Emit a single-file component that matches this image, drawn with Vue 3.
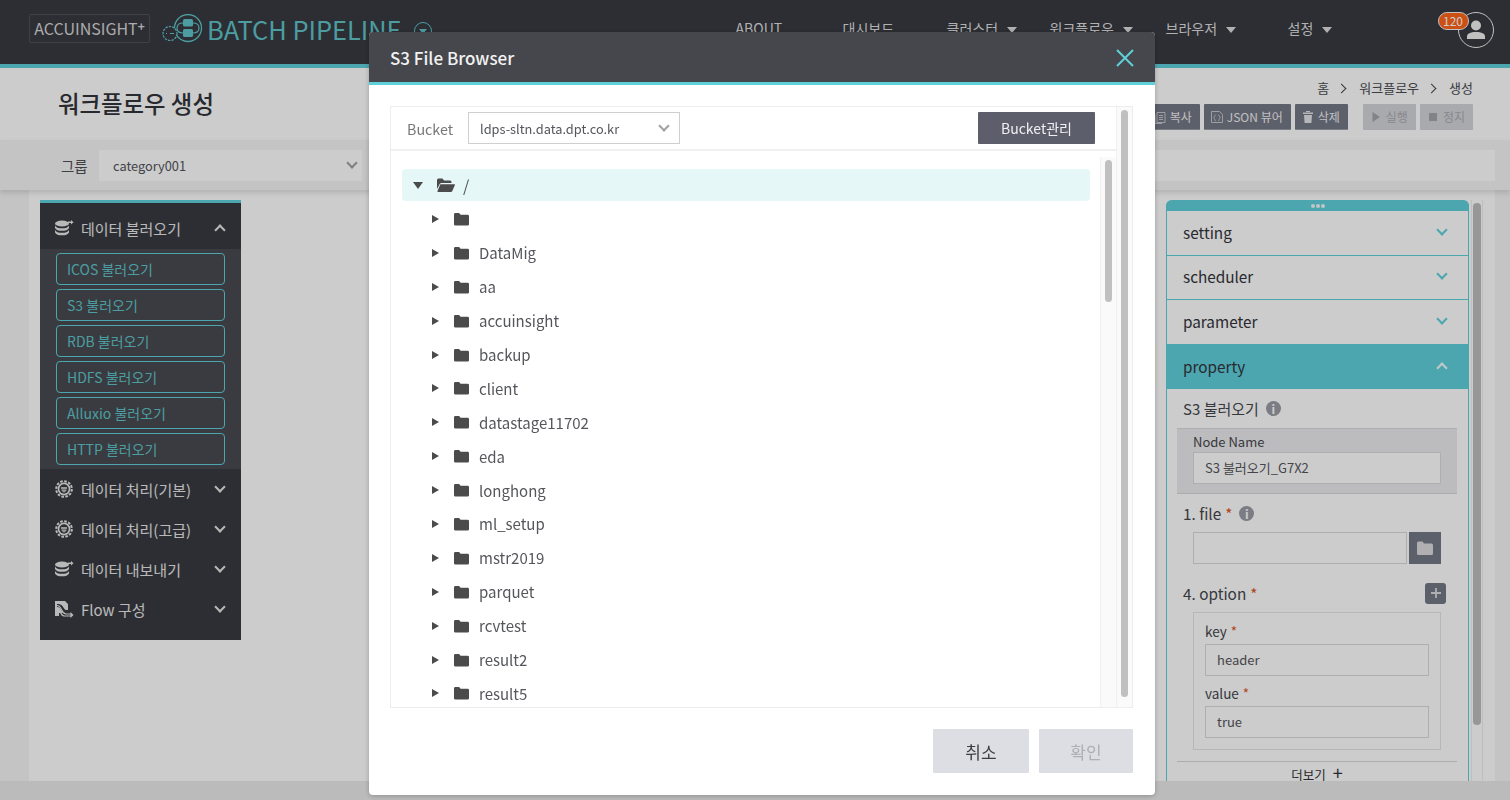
<script setup>
const navItems = [
  { label: 'ABOUT', width: 107 },
  { label: '대시보드', width: 104 },
  { label: '클러스터', width: 103, caret: true },
  { label: '워크플로우', width: 116, caret: true },
  { label: '브라우저', width: 122, caret: true },
  { label: '설정', width: 100, caret: true }
]

const loaders = ['ICOS 불러오기', 'S3 불러오기', 'RDB 불러오기', 'HDFS 불러오기', 'Alluxio 불러오기', 'HTTP 불러오기']

const menus = [
  { label: '데이터 처리(기본)', icon: 'gear' },
  { label: '데이터 처리(고급)', icon: 'gear' },
  { label: '데이터 내보내기', icon: 'db' },
  { label: 'Flow 구성', icon: 'flow' }
]

const folders = ['', 'DataMig', 'aa', 'accuinsight', 'backup', 'client', 'datastage11702', 'eda', 'longhong', 'ml_setup', 'mstr2019', 'parquet', 'rcvtest', 'result2', 'result5', 'sample']

const sections = ['setting', 'scheduler', 'parameter']
</script>

<template>
  <div class="page">
    <header class="topbar">
      <div class="brand-box">ACCUINSIGHT<sup>+</sup></div>
      <svg class="logo" viewBox="0 0 44 32" width="44" height="32" fill="none" stroke="#5fc5ca">
        <circle cx="28" cy="14" r="13.500" stroke-width="1.300" />
        <circle cx="10" cy="19.500" r="7" fill="#383a41" stroke-width="1.200" stroke-dasharray="2.500 1" />
        <path d="M10 19.500h4M6 19.500h1" stroke-width="1.200" />
        <path d="M23 9q-6 0-6 5t6 5M33 9q6 0 6 5t-6 5" stroke-width="1.200" />
        <rect x="23" y="5" width="10" height="7.500" rx="1.500" fill="#5fc5ca" stroke="none" />
        <rect x="23" y="15" width="10" height="8" rx="1.500" fill="#5fc5ca" stroke="none" />
      </svg>
      <div class="product">BATCH PIPELINE</div>
      <span class="product-toggle"><i></i></span>
      <nav class="nav">
        <a v-for="item in navItems" :key="item.label" class="nav-item" :style="{ width: item.width + 'px' }">
          {{ item.label }}<i v-if="item.caret" class="caret"></i>
        </a>
      </nav>
      <div class="profile">
        <span class="badge">120</span>
        <svg viewBox="0 0 24 24" width="24" height="24" fill="#f2f2f2">
          <circle cx="12" cy="7.500" r="5" />
          <path d="M3 21v-2.500c0-3 3.500-4.500 9-4.500s9 1.500 9 4.500V21z" />
        </svg>
      </div>
    </header>

    <section class="title-band">
      <h1>워크플로우 생성</h1>
      <div class="title-right">
        <div class="crumbs">
          <span>홈</span><i class="crumb-arrow"></i><span>워크플로우</span><i class="crumb-arrow"></i><span>생성</span>
        </div>
        <div class="tools">
          <button class="tool">
            <svg viewBox="0 0 14 14" width="14" height="14" fill="none" stroke="#c4c6cc"><path d="M4 2.500h8v10H4zM2 4.500v9h7M6 5.500h4M6 7.500h4M6 9.500h4" /></svg>복사
          </button>
          <button class="tool">
            <svg viewBox="0 0 14 14" width="14" height="14" fill="none" stroke="#c4c6cc"><path d="M1.500 1.500h8l3 3v8h-11z" /><path d="M6 5q-1.500 0-1.500 1.500v.5l-1 .5 1 .5v.5Q4.500 11 6 11M8 5q1.500 0 1.500 1.500v.5l1 .5-1 .5v.5Q9.500 11 8 11" stroke-width=".8" /></svg>JSON 뷰어
          </button>
          <button class="tool">
            <svg viewBox="0 0 14 14" width="14" height="14" fill="#e4e5e8"><path d="M2 2.500h10v1.500H2zM5 1h4v1H5zM3 5h8l-.6 8H3.600z" /></svg>삭제
          </button>
          <button class="tool off gap-left">
            <svg viewBox="0 0 14 14" width="14" height="14" fill="#a2a4a9"><path d="M3.500 2l7.500 5-7.500 5z" /></svg>실행
          </button>
          <button class="tool off">
            <svg viewBox="0 0 14 14" width="14" height="14" fill="#a2a4a9"><rect x="3" y="3" width="8" height="8" /></svg>정지
          </button>
        </div>
      </div>
    </section>

    <section class="filter-band">
      <label>그룹</label>
      <div class="filter-select">category001<i class="chev down grey"></i></div>
      <div class="filter-rest"></div>
    </section>

    <main class="workspace">
      <aside class="palette">
        <div class="menu-row open">
          <svg class="menu-icon" viewBox="0 0 20 18" width="20" height="18" fill="#e8e8e8">
            <ellipse cx="8" cy="4.500" rx="7" ry="3" />
            <path d="M1 6.500c1 2 3.500 2.800 7 2.800s6-.8 7-2.800v2.500c-1 2-3.500 2.800-7 2.800S2 11 1 9zM1 11c1 2 3.500 2.800 7 2.800s6-.8 7-2.800v2.500c-1 2-3.500 2.800-7 2.800s-6-.8-7-2.800z" />
            <path d="M14 2.500h3V1l2.500 2.200L17 5.400V4h-3z" />
          </svg>
          <span>데이터 불러오기</span>
          <i class="chev up"></i>
        </div>
        <div class="loader-list">
          <a v-for="name in loaders" :key="name" class="loader">{{ name }}</a>
        </div>
        <div v-for="menu in menus" :key="menu.label" class="menu-row">
          <svg v-if="menu.icon === 'gear'" class="menu-icon" viewBox="0 0 18 18" width="18" height="18" fill="none">
            <circle cx="9" cy="9" r="7.800" stroke="#e8e8e8" stroke-width="2" stroke-dasharray="2.600 1.480" />
            <circle cx="9" cy="9" r="6.400" fill="#e8e8e8" />
            <circle cx="9" cy="9" r="4.700" fill="#383a41" />
            <path d="M6 7.300h6v1.400H6zM6.500 9.500h5v1.200h-5zM7.500 11.300h3v1h-3z" fill="#e8e8e8" />
          </svg>
          <svg v-else-if="menu.icon === 'db'" class="menu-icon" viewBox="0 0 20 18" width="20" height="18" fill="#e8e8e8">
            <ellipse cx="8" cy="4.500" rx="7" ry="3" />
            <path d="M1 6.500c1 2 3.500 2.800 7 2.800s6-.8 7-2.800v2.500c-1 2-3.500 2.800-7 2.800S2 11 1 9zM1 11c1 2 3.500 2.800 7 2.800s6-.8 7-2.800v2.500c-1 2-3.500 2.800-7 2.800s-6-.8-7-2.800z" />
            <path d="M14 2.500h3V1l2.500 2.200L17 5.400V4h-3z" />
          </svg>
          <svg v-else class="menu-icon" viewBox="0 0 20 18" width="20" height="18" fill="none">
            <path d="M1 1h10l3 3v6h-2.500c-1.500-1-2-3-3.500-4.500S4.500 4 3 4v3c1.500 0 2.500.5 3.500 2s1.500 3 2.500 4H5v3H1z" fill="#e8e8e8" />
            <path d="M3 5.500c5 0 4 8 9 8.500h5M3 8.500c3.500 0 3 7 7 7.500h7" stroke="#e8e8e8" stroke-width="1.200" />
            <path d="M16.500 12l3 3-3 3z" fill="#e8e8e8" />
          </svg>
          <span>{{ menu.label }}</span>
          <i class="chev down"></i>
        </div>
      </aside>

      <div class="spacer"></div>

      <aside class="props">
        <div class="props-grip"><i></i><i></i><i></i></div>
        <div v-for="name in sections" :key="name" class="section-row">
          {{ name }}<i class="chev down teal"></i>
        </div>
        <div class="section-row active">property<i class="chev up light"></i></div>
        <div class="props-body">
          <div class="node-title">S3 불러오기<span class="info">i</span></div>
          <div class="node-band">
            <div class="band-label">Node Name</div>
            <div class="field">S3 불러오기_G7X2</div>
          </div>
          <div class="prop-head file-head">1. file<em>*</em><span class="info">i</span></div>
          <div class="file-row">
            <div class="field"></div>
            <button class="file-btn">
              <svg viewBox="0 0 16 14" width="16" height="14" fill="#dcdde0"><path d="M0 2q0-1.500 1.500-1.500h4L7 2.500h7.500Q16 2.500 16 4v8.500q0 1.500-1.500 1.500h-13Q0 14 0 12.500z" /></svg>
            </button>
          </div>
          <div class="prop-head option-head">
            <span>4. option<em>*</em></span>
            <button class="add-btn">
              <svg viewBox="0 0 12 12" width="12" height="12" stroke="#dcdde0" stroke-width="1.800"><path d="M6 1v10M1 6h10" /></svg>
            </button>
          </div>
          <div class="option-box">
            <div class="opt-label">key<em>*</em></div>
            <div class="field">header</div>
            <div class="opt-label value">value<em>*</em></div>
            <div class="field">true</div>
          </div>
          <div class="more">더보기<span>+</span></div>
        </div>
      </aside>

      <div class="props-scroll"><i></i></div>
    </main>

    <footer class="bottom"></footer>

    <div class="overlay">
      <div class="modal">
        <div class="modal-head">
          <span>S3 File Browser</span>
          <svg viewBox="0 0 18 18" width="18" height="18" stroke="#5fd0d8" stroke-width="2" fill="none"><path d="M1 1l16 16M17 1L1 17" /></svg>
        </div>
        <div class="modal-body">
          <div class="browser">
            <div class="browser-main">
              <div class="bucket-row">
                <label>Bucket</label>
                <div class="bucket-select">ldps-sltn.data.dpt.co.kr<i class="chev down grey"></i></div>
                <button class="bucket-btn">Bucket관리</button>
              </div>
              <div class="tree-wrap">
                <div class="tree">
                  <div class="root-row">
                    <i class="tri-down"></i>
                    <svg viewBox="0 0 18 14" width="18" height="14" fill="#4b4b4b">
                      <path d="M0 2q0-1.500 1.500-1.500h4L7 2.500h6q1.500 0 1.500 1.500v1H4.500q-1.200 0-1.800 1L0 11z" />
                      <path d="M3.500 6.200h14q.6 0 .4.700l-2.600 6q-.4 1-1.400 1H1q-.8 0-.5-.8l2.500-6.200q.2-.7.500-.7z" />
                    </svg>
                    <span>/</span>
                  </div>
                  <div v-for="(folder, i) in folders" :key="i" class="tree-row">
                    <i class="tri-right"></i>
                    <svg viewBox="0 0 16 14" width="15" height="14" fill="#4b4b4b"><path d="M0 2q0-1.500 1.500-1.500h4L7 2.500h7.500Q16 2.500 16 4v8.500q0 1.500-1.500 1.500h-13Q0 14 0 12.500z" /></svg>
                    <span>{{ folder }}</span>
                  </div>
                </div>
                <div class="scroll-track inner"><i></i></div>
              </div>
            </div>
            <div class="scroll-track outer"><i></i></div>
          </div>
          <div class="modal-actions">
            <button class="action">취소</button>
            <button class="action disabled">확인</button>
          </div>
        </div>
      </div>
    </div>
  </div>
</template>

<style>
body {
  margin: 0;
  overflow: hidden;
}
</style>

<style scoped>
.page {
  width: 1510px;
  height: 800px;
  overflow: hidden;
  display: flex;
  flex-direction: column;
  background: #f5f5f5;
  color: #383a41;
  font-family: "Noto Sans CJK KR", "Noto Sans", sans-serif;
}

button {
  font-family: inherit;
  border: none;
  padding: 0;
}

i {
  display: block;
  font-style: normal;
}

em {
  font-style: normal;
  color: #e0531c;
  margin-left: 4px;
}

/* 상단 헤더 */
.topbar {
  height: 64px;
  flex: none;
  display: flex;
  align-items: center;
  background: #383a41;
  border-bottom: 4px solid #5fd0dc;
  padding-left: 29px;
}

.brand-box {
  width: 121px;
  height: 29px;
  margin-top: -8px;
  box-sizing: border-box;
  border: 1px solid #50525a;
  border-radius: 2px;
  display: flex;
  align-items: center;
  justify-content: center;
  color: #d6d6d6;
  font-size: 16px;
  line-height: 1;
}

.brand-box sup {
  font-size: 12px;
  font-weight: 700;
  margin-top: -4px;
  vertical-align: baseline;
}

.logo {
  margin: -4px 0 0 10px;
}

.product {
  margin: -7px 0 0 3px;
  font-size: 25.400px;
  line-height: 32px;
  color: #5fc5ca;
  white-space: nowrap;
}

.product-toggle {
  width: 18px;
  height: 18px;
  margin: -2px 0 0 12px;
  box-sizing: border-box;
  border: 1.500px solid #5fc5ca;
  border-radius: 50%;
  display: flex;
  align-items: center;
  justify-content: center;
}

.product-toggle i {
  border-left: 4px solid transparent;
  border-right: 4px solid transparent;
  border-top: 5px solid #5fc5ca;
}

.nav {
  display: flex;
  margin-left: 304px;
  margin-top: -8px;
}

.nav-item {
  display: flex;
  align-items: center;
  font-size: 14px;
  color: #dedede;
  white-space: nowrap;
}

.caret {
  margin: 3px 0 0 9px;
  border-left: 5px solid transparent;
  border-right: 5px solid transparent;
  border-top: 6px solid #dedede;
}

.profile {
  position: relative;
  width: 36px;
  height: 36px;
  margin: -4px 0 0 70px;
  box-sizing: border-box;
  border: 1px solid #f2f2f2;
  border-radius: 50%;
  display: flex;
  align-items: center;
  justify-content: center;
}

.badge {
  position: absolute;
  left: -21px;
  top: -1px;
  width: 31px;
  height: 18px;
  border-radius: 9px;
  border: 1px solid #f2f2f2;
  box-sizing: border-box;
  background: #ff6318;
  color: #fff;
  font-size: 12px;
  line-height: 16px;
  text-align: center;
}

/* 타이틀 영역 */
.title-band {
  height: 72px;
  flex: none;
  display: flex;
  justify-content: space-between;
  background: #fff;
}

.title-band h1 {
  margin: 19px 0 0 58px;
  font-size: 23.400px;
  line-height: 32px;
  font-weight: 500;
  color: #33343a;
}

.title-right {
  display: flex;
  flex-direction: column;
  align-items: flex-end;
  padding-right: 37px;
}

.crumbs {
  display: flex;
  align-items: center;
  margin-top: 10px;
  font-size: 13px;
  line-height: 20px;
  color: #4a4b50;
}

.crumb-arrow {
  width: 6px;
  height: 6px;
  margin: 0 14px 0 9px;
  border-top: 1.500px solid #444;
  border-right: 1.500px solid #444;
  transform: rotate(45deg);
}

.tools {
  display: flex;
  gap: 4px;
  margin-top: 6px;
}

.tool {
  height: 26px;
  padding: 0 8px 0 6px;
  display: flex;
  align-items: center;
  gap: 3px;
  background: #747886;
  border-bottom: 1px solid #9a9da8;
  border-radius: 1px;
  color: #f0f0f2;
  font-size: 12px;
  white-space: nowrap;
}

.tool.off {
  background: #d4d5da;
  border-bottom-color: #d4d5da;
  color: #a9abb0;
}

.gap-left {
  margin-left: 11px;
}

/* 그룹 필터 */
.filter-band {
  height: 50px;
  flex: none;
  display: flex;
  align-items: center;
  gap: 0;
  background: #f5f5f5;
  padding-right: 15px;
  box-shadow: 0 3px 5px rgba(0, 0, 0, 0.12);
  position: relative;
}

.filter-band label {
  margin-left: 61px;
  width: 38px;
  font-size: 14.500px;
  color: #4f5055;
}

.filter-select {
  width: 263px;
  height: 31px;
  box-sizing: border-box;
  padding: 0 6px 0 14px;
  display: flex;
  align-items: center;
  justify-content: space-between;
  background: #fff;
  font-size: 12.800px;
  color: #53545a;
}

.filter-rest {
  flex: 1;
  height: 31px;
  margin-left: 8px;
  background: #fff;
}

.chev {
  width: 6px;
  height: 6px;
  flex: none;
  border-right: 2px solid #e8e8e8;
  border-bottom: 2px solid #e8e8e8;
  transform: rotate(45deg);
  margin-top: -4px;
}

.chev.up {
  transform: rotate(225deg);
  margin-top: 4px;
}

.chev.grey {
  border-color: #a0a0a0;
}

.chev.teal {
  border-color: #5fd0dc;
}

.chev.light {
  border-color: #f4fbfb;
}

/* 작업 영역 */
.workspace {
  flex: 1;
  min-height: 0;
  display: flex;
  align-items: flex-start;
  margin: 0 15px 0 29px;
  padding: 10px 0 0 11px;
  background: #fff;
  overflow: hidden;
}

.palette {
  width: 201px;
  height: 440px;
  flex: none;
  background: #383a41;
  border-top: 3px solid #5fd0dc;
  box-sizing: border-box;
}

.menu-row {
  height: 40px;
  box-sizing: border-box;
  padding: 0 17px 0 14px;
  display: flex;
  align-items: center;
  color: #e8e8e8;
  font-size: 15px;
}

.menu-row.open {
  height: 46px;
  padding-top: 4px;
}

.menu-row span {
  flex: 1;
  margin-left: 7px;
  white-space: nowrap;
}

.menu-icon {
  flex: none;
  width: 20px;
}

.loader-list {
  background: #494a50;
  padding: 4px 16px 0;
  height: 220px;
  box-sizing: border-box;
  display: flex;
  flex-direction: column;
  gap: 4px;
}

.loader {
  height: 32px;
  flex: none;
  box-sizing: border-box;
  border: 1px solid #5fd0dc;
  border-radius: 4px;
  padding-left: 10px;
  display: flex;
  align-items: center;
  color: #5fc5ca;
  font-size: 14px;
}

.spacer {
  flex: 1;
}

.props {
  width: 303px;
  flex: none;
  box-sizing: border-box;
  border: 1px solid #5fd0dc;
  border-top: none;
  border-radius: 6px 6px 0 0;
  background: #fff;
}

.props-grip {
  height: 11px;
  margin: 0 -1px;
  display: flex;
  align-items: center;
  justify-content: center;
  gap: 1px;
  background: #5fd0dc;
  border-radius: 6px 6px 0 0;
}

.props-grip i {
  width: 4px;
  height: 4px;
  border-radius: 50%;
  background: #f0f8f8;
}

.section-row {
  height: 44.500px;
  box-sizing: border-box;
  padding: 0 22px 2px 16px;
  display: flex;
  align-items: center;
  justify-content: space-between;
  border-bottom: 1px solid #5fd0dc;
  font-size: 15.300px;
  color: #33343a;
}

.section-row.active {
  background: #5fd0dc;
  border-bottom: none;
}

.props-body {
  padding: 8px 11px 0 10px;
  color: #45464c;
}

.node-title {
  display: flex;
  align-items: center;
  height: 23px;
  padding-left: 6px;
  font-size: 15px;
}

.info {
  width: 15px;
  height: 15px;
  margin-left: 7px;
  border-radius: 50%;
  background: #9a9ca6;
  color: #fff;
  font-size: 12px;
  line-height: 15px;
  font-weight: 700;
  text-align: center;
}

.node-band {
  margin-top: 8px;
  height: 66px;
  box-sizing: border-box;
  border-top: 1px solid #d8d9dc;
  border-bottom: 1px solid #d8d9dc;
  background: #ebecef;
  padding: 3px 16px 0;
}

.band-label {
  font-size: 13px;
  line-height: 20px;
}

.field {
  height: 32px;
  box-sizing: border-box;
  border: 1px solid #dadbde;
  background: #fff;
  padding: 0 0 2px 11px;
  display: flex;
  align-items: center;
  font-size: 13px;
  color: #55565c;
}

.prop-head {
  display: flex;
  align-items: center;
  padding-left: 6px;
  font-size: 15.300px;
  line-height: 24px;
}

.file-head {
  margin-top: 7px;
}

.file-row {
  display: flex;
  gap: 2px;
  margin: 7px 16px 0;
}

.file-row .field {
  flex: 1;
}

.file-btn {
  width: 32px;
  height: 32px;
  display: flex;
  align-items: center;
  justify-content: center;
  background: #747886;
}

.option-head {
  justify-content: space-between;
  margin-top: 17px;
  padding-right: 11px;
}

.add-btn {
  width: 21px;
  height: 21px;
  border-radius: 3px;
  display: flex;
  align-items: center;
  justify-content: center;
  background: #747886;
}

.option-box {
  margin: 7px 16px 0;
  height: 138px;
  box-sizing: border-box;
  border: 1px solid #e4e5e7;
  padding: 7px 11px 0;
}

.opt-label {
  font-size: 13.500px;
  line-height: 22px;
  margin-bottom: 2px;
}

.opt-label.value {
  margin-top: 6px;
}

.more {
  margin-top: 11px;
  border-top: 1px solid #d8d9dc;
  text-align: center;
  font-size: 12.500px;
  line-height: 26px;
  color: #33343a;
}

.more span {
  margin-left: 7px;
  font-size: 18px;
  line-height: 1;
}

.props-scroll {
  width: 12px;
  height: 590px;
  flex: none;
  margin: 0 12px 0 2px;
  box-sizing: border-box;
  padding: 3px 1px 0;
  border-right: 1px solid #eee;
  border-left: 1px solid #eee;
}

.props-scroll i {
  height: 522px;
  border-radius: 5px;
  background: #bdbdbd;
}

.bottom {
  height: 19px;
  flex: none;
  background: #eaeaea;
}

/* 모달 */
.overlay {
  position: fixed;
  inset: 0;
  box-sizing: border-box;
  padding: 32px 0 0 369px;
  background: rgba(0, 0, 0, 0.2);
}

.modal {
  width: 786px;
  height: 763px;
  display: flex;
  flex-direction: column;
  background: #fff;
  border-radius: 4px;
  overflow: hidden;
  box-shadow: 0 1px 5px rgba(0, 0, 0, 0.25);
}

.modal-head {
  height: 53px;
  flex: none;
  box-sizing: border-box;
  padding: 1px 21px 0;
  display: flex;
  align-items: center;
  justify-content: space-between;
  background: #46474c;
  border-bottom: 3px solid #5fd0d8;
  color: #f2f2f2;
  font-size: 17px;
  font-weight: 500;
}

.modal-body {
  flex: 1;
  min-height: 0;
  padding: 21px 22px 0 21px;
}

.browser {
  height: 602px;
  box-sizing: border-box;
  display: flex;
  border: 1px solid #ededed;
}

.browser-main {
  flex: 1;
  min-width: 0;
  display: flex;
  flex-direction: column;
}

.bucket-row {
  height: 44px;
  flex: none;
  box-sizing: border-box;
  display: flex;
  align-items: center;
  padding: 0 21px 0 16px;
  border-bottom: 2px solid #f0f0f0;
}

.bucket-row label {
  width: 61px;
  font-size: 14.300px;
  color: #777;
}

.bucket-select {
  width: 212px;
  height: 32px;
  box-sizing: border-box;
  border: 1px solid #cfcfcf;
  padding: 0 11px 0 11px;
  display: flex;
  align-items: center;
  justify-content: space-between;
  font-size: 12.800px;
  color: #55565b;
}

.bucket-btn {
  margin-left: auto;
  width: 117px;
  height: 32px;
  background: #5c5f6b;
  border-radius: 1px;
  color: #f0f0f2;
  font-size: 14px;
}

.tree-wrap {
  flex: 1;
  min-height: 0;
  display: flex;
}

.tree {
  flex: 1;
  min-width: 0;
  overflow: hidden;
  padding: 18px 10px 0 11px;
}

.root-row {
  height: 32px;
  box-sizing: border-box;
  padding-left: 11px;
  display: flex;
  align-items: center;
  background: #e5f7f7;
  border-radius: 4px;
  color: #55565b;
  font-size: 16px;
}

.root-row svg {
  margin-left: 14px;
}

.root-row span {
  margin-left: 8px;
}

.tree-row {
  height: 33.900px;
  box-sizing: border-box;
  padding-left: 30px;
  display: flex;
  align-items: center;
  color: #55565b;
  font-size: 15px;
}

.root-row + .tree-row {
  margin-top: 1px;
}

.tree-row svg {
  flex: none;
  margin-left: 15px;
}

.tree-row span {
  margin-left: 10px;
}

.tri-down {
  flex: none;
  border-left: 5px solid transparent;
  border-right: 5px solid transparent;
  border-top: 7px solid #4b4b4b;
}

.tri-right {
  flex: none;
  border-top: 4.500px solid transparent;
  border-bottom: 4.500px solid transparent;
  border-left: 7px solid #4b4b4b;
}

.scroll-track {
  width: 16px;
  flex: none;
  box-sizing: border-box;
  padding: 3px 4px 0;
  border-left: 1px solid #f0f0f0;
  background: #fafafa;
}

.scroll-track i {
  border-radius: 4px;
  background: #c0c0c0;
}

.scroll-track.inner {
  margin-top: 6px;
}

.scroll-track.inner i {
  height: 142px;
}

.scroll-track.outer i {
  height: 587px;
}

.modal-actions {
  display: flex;
  justify-content: flex-end;
  gap: 10px;
  margin-top: 21px;
}

.action {
  width: 96px;
  height: 44px;
  background: #dddee3;
  border-radius: 1px;
  color: #3c3d42;
  font-size: 17px;
}

.action.disabled {
  width: 94px;
  color: #aeb0b6;
}
</style>
